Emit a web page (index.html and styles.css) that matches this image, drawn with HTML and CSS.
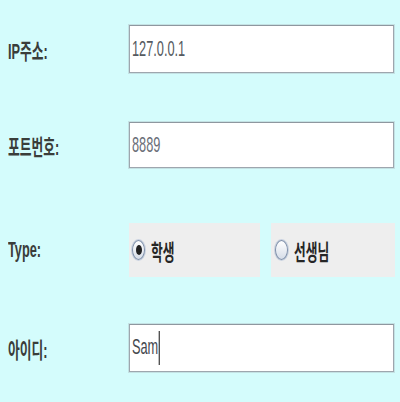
FILE: index.html
```html
<!DOCTYPE html>
<html lang="ko">
<head>
<meta charset="utf-8">
<link rel="stylesheet" href="styles.css">
</head>
<body>
<div class="form">
  <div class="row r1">
    <div class="label"><span class="t">IP주소:</span></div>
    <div class="field"><span class="t val1">127.0.0.1</span></div>
  </div>
  <div class="row r2">
    <div class="label"><span class="t">포트번호:</span></div>
    <div class="field"><span class="t val2">8889</span></div>
  </div>
  <div class="row r3">
    <div class="label"><span class="t">Type:</span></div>
    <div class="radios">
      <div class="panel p1"><span class="radio on"></span><span class="t rl">학생</span></div>
      <div class="panel p2"><span class="radio"></span><span class="t rl">선생님</span></div>
    </div>
  </div>
  <div class="row r4">
    <div class="label"><span class="t">아이디:</span></div>
    <div class="field"><span class="t val3">Sam<span class="caret"></span></span></div>
  </div>
</div>
</body>
</html>
```
FILE: styles.css
```css
html, body {
  margin: 0;
  padding: 0;
  background: #d4fcfc;
  width: 400px;
  height: 402px;
  overflow: hidden;
}
.form {
  padding-top: 25px;
  display: flex;
  flex-direction: column;
  font-family: "Liberation Sans", "Noto Sans CJK KR", sans-serif;
  font-size: 22px;
}
.row {
  display: flex;
  align-items: center;
}
.r1 { height: 48px; }
.r2 { height: 46px; margin-top: 49px; }
.r3 { height: 54px; margin-top: 55px; }
.r4 { height: 48px; margin-top: 47px; }
.label {
  width: 129px;
  padding-left: 8px;
  box-sizing: border-box;
  color: #3a3d3a;
  font-weight: bold;
  white-space: nowrap;
}
.t {
  display: inline-block;
  transform: scaleX(0.58);
  transform-origin: left center;
  white-space: nowrap;
}
.field {
  width: 265px;
  height: 100%;
  box-sizing: border-box;
  background: #fff;
  border: 1px solid #9ea6ae;
  border-top-color: #8e979f;
  box-shadow: 0 0 0 1px #c4e2e4;
  padding-left: 2px;
  display: flex;
  align-items: center;
}
.val1 { color: #555a60; }
.val2 { color: #6a6e78; }
.val3 { color: #45484e; position: relative; }
.caret {
  display: inline-block;
  width: 2px;
  height: 34px;
  background: #333;
  vertical-align: middle;
  margin-left: 1px;
}
.radios {
  display: flex;
  gap: 11px;
  height: 100%;
}
.panel {
  background: #eeeeee;
  height: 100%;
  display: flex;
  align-items: center;
}
.p1 { width: 131px; padding-left: 3px; box-sizing: border-box; }
.p2 { width: 124px; padding-left: 4px; box-sizing: border-box; }
.radio {
  width: 11px;
  height: 18px;
  border-radius: 50%;
  border: 1px solid #7f90aa;
  box-shadow: 0 0 0 1px #c9d2e0;
  background: linear-gradient(#ffffff, #d6dde8);
  display: flex;
  align-items: center;
  justify-content: center;
  flex: none;
}
.radio.on::after {
  content: "";
  width: 6px;
  height: 10px;
  border-radius: 50%;
  background: #222;
}
.rl {
  color: #262626;
  font-weight: bold;
  margin-left: 6px;
}
```
